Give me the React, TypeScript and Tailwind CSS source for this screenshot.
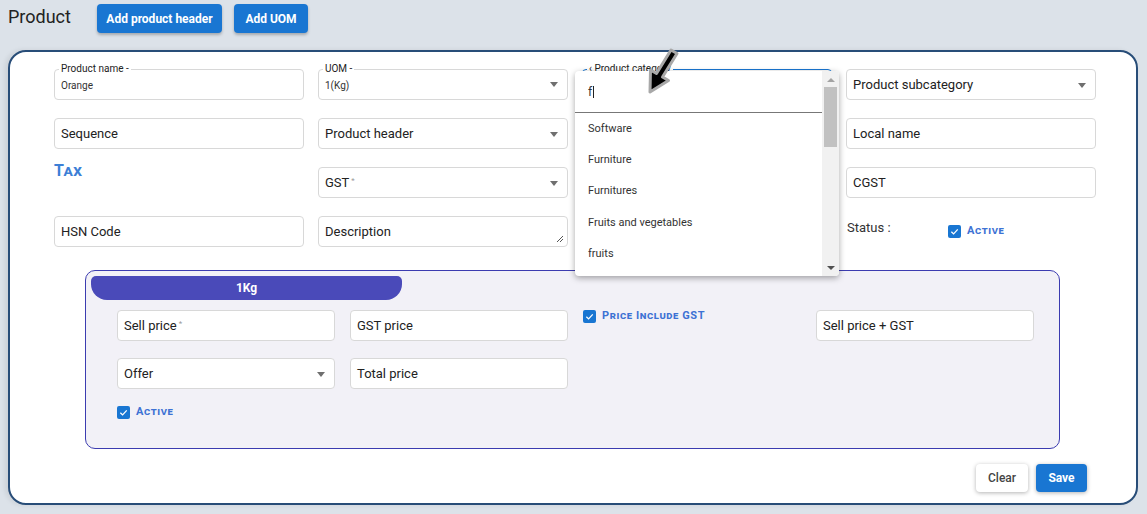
import { ReactNode } from "react";

const Caret = () => (
  <span className="ml-auto h-0 w-0 border-x-[4px] border-t-[5px] border-x-transparent border-t-[#6f6f6f]" />
);

const Star = () => <span className="ml-[2px] -mt-[4px] text-[8px] text-[#9a9a9a]">*</span>;

const Field = ({
  children,
  select,
  textarea,
  className = "",
}: {
  children?: ReactNode;
  select?: boolean;
  textarea?: boolean;
  className?: string;
}) => (
  <div
    className={`relative flex h-[31px] items-center rounded-[4px] border border-[#d8d8d8] bg-white pl-[6px] pr-[9px] pt-[1px] text-[13px] leading-[16px] text-[#222] ${className}`}
  >
    {children}
    {select && <Caret />}
    {textarea && (
      <svg className="absolute bottom-[3px] right-[3px]" width="8" height="8" viewBox="0 0 8 8">
        <path d="M7 1 L1 7 M7 4 L4 7" stroke="#555" strokeWidth="1" />
      </svg>
    )}
  </div>
);

const FloatField = ({ label, value, select }: { label: string; value: string; select?: boolean }) => (
  <div className="relative flex h-[31px] items-center rounded-[4px] border border-[#d8d8d8] bg-white pl-[6px] pr-[9px] text-[10px] text-[#333]">
    <span className="absolute -top-[7px] left-[4px] bg-white px-[2px] leading-[12px] text-[#222]">{label} -</span>
    <span className="mt-[2px]">{value}</span>
    {select && <Caret />}
  </div>
);

const Check = ({ label }: { label: string }) => (
  <div className="flex items-center gap-[6px]">
    <span className="flex h-[13px] w-[13px] items-center justify-center rounded-[2px] bg-[#1976d2]">
      <svg width="9" height="9" viewBox="0 0 10 10">
        <path d="M1.5 5.2 L4 7.6 L8.6 2.6" fill="none" stroke="white" strokeWidth="1.4" />
      </svg>
    </span>
    <span className="text-[11px] font-bold leading-[14px] tracking-[0.6px] text-[#3d72d4] [font-variant:small-caps]">
      {label}
    </span>
  </div>
);

const options = ["Software", "Furniture", "Furnitures", "Fruits and vegetables", "fruits"];

export default function App() {
  return (
    <div className="relative h-[514px] w-full overflow-hidden bg-[#dce2e9] pl-[8px] pr-[9px] font-['Roboto',sans-serif]">
      {/* header */}
      <div className="flex h-[50px] items-start">
        <h1 className="mt-[6px] w-[89px] text-[18px] leading-[22px] text-[#222]">Product</h1>
        <button className="mt-[4px] h-[29px] w-[125px] rounded-[4px] bg-[#1976d2] text-[12px] font-bold text-white shadow-[0_2px_3px_rgba(0,0,0,0.25)]">
          Add product header
        </button>
        <button className="ml-[12px] mt-[4px] h-[29px] w-[74px] rounded-[4px] bg-[#1976d2] text-[12px] font-bold text-white shadow-[0_2px_3px_rgba(0,0,0,0.25)]">
          Add UOM
        </button>
      </div>

      {/* card */}
      <div className="relative h-[455px] rounded-[18px] border-2 border-[#284d78] bg-white pt-[17px] shadow-[-3px_0_5px_rgba(0,0,0,0.08)]">
        <div className="ml-[44px] grid grid-cols-[250px_250px_250px_250px] grid-rows-[31px_31px_31px_30px] gap-x-[14px] gap-y-[18px]">
          <FloatField label="Product name" value="Orange" />
          <FloatField label="UOM" value="1(Kg)" select />
          <div className="relative h-[31px] rounded-[4px] border border-[#1976d2] bg-white">
            <span className="absolute -top-[7px] left-[4px] bg-white px-[2px] text-[10px] leading-[12px] text-[#222]">
              ‹ Product category
            </span>
          </div>
          <Field select>Product subcategory</Field>

          <Field>Sequence</Field>
          <Field select>Product header</Field>
          <Field />
          <Field>Local name</Field>

          <div className="-mt-[6px] text-[16px] font-bold leading-[20px] tracking-[0.3px] text-[#3d7fd6] [font-variant:small-caps]">
            Tax
          </div>
          <Field select>
            GST
            <Star />
          </Field>
          <Field />
          <Field>CGST</Field>

          <Field>HSN Code</Field>
          <Field textarea>Description</Field>
          <Field />
          <div className="flex items-start">
            <span className="mt-[4px] w-[102px] pl-[1px] text-[13px] leading-[16px] text-[#333]">Status :</span>
            <div className="mt-[8px]">
              <Check label="Active" />
            </div>
          </div>
        </div>

        {/* unit box */}
        <div className="ml-[75px] mt-[24px] h-[179px] w-[975px] rounded-[10px] border border-[#3c3cb0] bg-[#f2f1f7]">
          <div className="ml-[5px] mt-[5px] flex h-[24px] w-[311px] items-center justify-center rounded-b-[16px] rounded-t-[5px] bg-[#4a4ab9] text-[12px] font-bold text-white">
            1Kg
          </div>
          <div className="ml-[31px] mt-[10px] grid grid-cols-[218px_218px_218px_218px] grid-rows-[31px_31px] gap-x-[15px] gap-y-[17px]">
            <Field>
              Sell price
              <Star />
            </Field>
            <Field>GST price</Field>
            <div className="-mt-[1px]">
              <Check label="Price Include GST" />
            </div>
            <Field>Sell price + GST</Field>
            <Field select>Offer</Field>
            <Field>Total price</Field>
          </div>
          <div className="ml-[31px] mt-[16px]">
            <Check label="Active" />
          </div>
        </div>

        {/* actions */}
        <div className="mt-[15px] flex justify-end gap-[8px] pr-[49px]">
          <button className="h-[28px] w-[52px] rounded-[4px] bg-white text-[12px] font-medium text-[#444] shadow-[0_1px_4px_rgba(0,0,0,0.3)]">
            Clear
          </button>
          <button className="h-[28px] w-[51px] rounded-[4px] bg-[#1976d2] text-[12px] font-bold text-white shadow-[0_1px_4px_rgba(0,0,0,0.3)]">
            Save
          </button>
        </div>

        {/* category dropdown */}
        <div className="absolute left-[565px] top-[19px] flex h-[205px] w-[264px] overflow-hidden rounded-[4px] bg-white shadow-[0_2px_6px_rgba(0,0,0,0.35)]">
          <div className="w-[247px]">
            <div className="flex h-[42px] items-center border-b border-[#777] pl-[13px] text-[12px] text-[#333]">
              f<span className="ml-[1px] h-[12px] w-px bg-[#222]" />
            </div>
            {options.map((o) => (
              <div key={o} className="flex h-[31.3px] items-center pl-[13px] pt-[1px] text-[11px] text-[#333]">
                {o}
              </div>
            ))}
          </div>
          <div className="flex w-[17px] flex-col items-center bg-[#f1f1f1]">
            <span className="mt-[7px] h-0 w-0 border-x-[4px] border-b-[4px] border-x-transparent border-b-[#a3a3a3]" />
            <span className="mt-[5px] h-[60px] w-[13px] bg-[#c1c1c1]" />
            <span className="mt-auto mb-[6px] h-0 w-0 border-x-[4px] border-t-[4px] border-x-transparent border-t-[#505050]" />
          </div>
        </div>
      </div>

      {/* mouse pointer */}
      <svg className="absolute left-[638px] top-[42px]" width="50" height="60" viewBox="0 0 50 60">
        <polygon
          points="12,50 12.5,28 18.5,31.5 33,8 39,11.5 24.5,35 30.5,38.5"
          fill="#000"
          stroke="#a8a8a8"
          strokeWidth="3"
          strokeLinejoin="round"
        />
      </svg>
    </div>
  );
}
